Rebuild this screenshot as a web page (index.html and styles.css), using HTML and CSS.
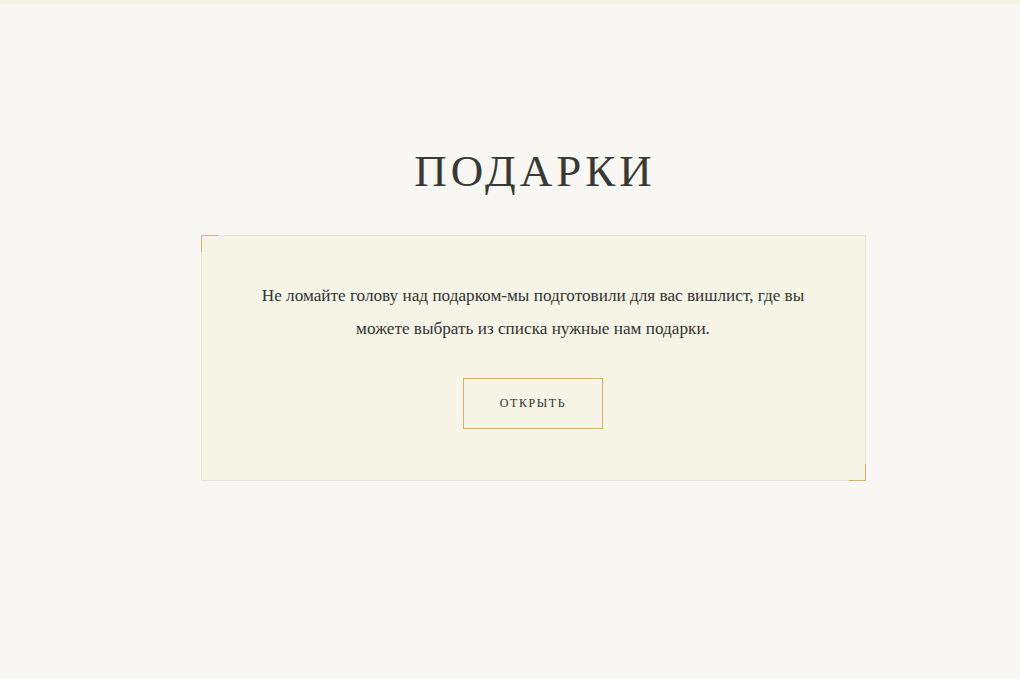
FILE: index.html
```html
<!DOCTYPE html>
<html lang="ru">
<head>
<meta charset="utf-8">
<link rel="stylesheet" href="styles.css">
</head>
<body>
<div class="topbar"></div>
<main class="section">
  <h1 class="title">ПОДАРКИ</h1>
  <div class="card">
    <span class="corner corner-tl"></span>
    <span class="corner corner-br"></span>
    <p class="text">Не ломайте голову над подарком-мы подготовили для вас вишлист, где вы можете выбрать из списка нужные нам подарки.</p>
    <a class="btn" href="#">ОТКРЫТЬ</a>
  </div>
</main>
</body>
</html>
```
FILE: styles.css
```css
html, body {
  margin: 0;
  padding: 0;
  background: #f8f7f3;
  height: 100%;
}
body {
  font-family: "Liberation Serif", "Times New Roman", serif;
  color: #333330;
}
.topbar {
  height: 4px;
  background: #f2f2e3;
}
.section {
  display: flex;
  flex-direction: column;
  align-items: center;
  padding-top: 138px;
  padding-left: 46px;
}
.title {
  margin: 0;
  font-weight: 400;
  font-size: 45px;
  line-height: 58px;
  letter-spacing: 4px;
  padding-left: 4px;
  color: #3a3933;
}
.card {
  position: relative;
  margin-top: 35px;
  width: 663px;
  height: 244px;
  box-sizing: content-box;
  background: #f5f4e6;
  border: 1px solid #ebe3d8;
  display: flex;
  flex-direction: column;
  align-items: center;
}
.corner {
  position: absolute;
  width: 16px;
  height: 16px;
}
.corner-tl {
  top: -1px;
  left: -1px;
  border-top: 1px solid #d2b46c;
  border-left: 1px solid #d2b46c;
}
.corner-br {
  bottom: -1px;
  right: -1px;
  border-bottom: 1px solid #d2b46c;
  border-right: 1px solid #d2b46c;
}
.text {
  margin: 43px 0 0;
  width: 580px;
  text-align: center;
  font-size: 17.2px;
  line-height: 33px;
  color: #333330;
}
.btn {
  margin-top: 33px;
  width: 138px;
  height: 49px;
  border: 1px solid #d4b36c;
  display: flex;
  align-items: center;
  justify-content: center;
  text-decoration: none;
  font-size: 12px;
  letter-spacing: 1.6px;
  color: #333330;
}
```
